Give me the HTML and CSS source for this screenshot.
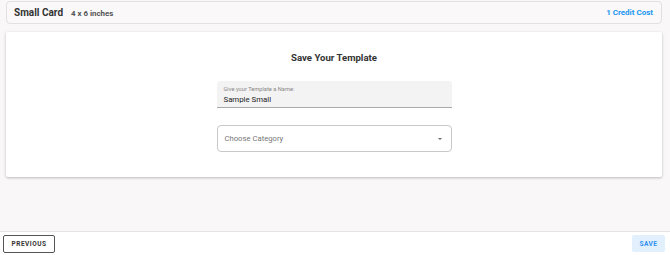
FILE: index.html
```html
<!DOCTYPE html>
<html lang="en">
<head>
  <meta charset="UTF-8" />
  <title>Save Template</title>
  <link rel="stylesheet" href="styles.css">
</head>
<body>

  <div class="page">
    <!-- CARD INFO -->
    <div class="info-bar">
      <div class="info-left">
        <span class="card-name">Small Card</span>
        <span class="card-size">4 x 6 inches</span>
      </div>
      <span class="credit">1 Credit Cost</span>
    </div>

    <!-- SAVE FORM -->
    <div class="panel">
      <h2 class="panel-title">Save Your Template</h2>
      <div class="field filled">
        <label>Give your Template a Name:</label>
        <div class="value">Sample Small</div>
      </div>
      <div class="field outlined">
        <span class="placeholder">Choose Category</span>
        <span class="caret"></span>
      </div>
    </div>
  </div>

  <!-- FOOTER -->
  <div class="footer">
    <button class="btn-prev">PREVIOUS</button>
    <button class="btn-save">SAVE</button>
  </div>

</body>
</html>
```

FILE: styles.css
```css
body {
  margin: 0;
  background: #f9f7f7;
  font-family: Roboto, "Liberation Sans", Arial, sans-serif;
  color: #333;
  height: 255px;
  display: flex;
  flex-direction: column;
}

.page {
  flex: 1;
  padding: 1px 8px 0 6px;
}

.info-bar {
  height: 21px;
  border: 1px solid #e2e0e0;
  border-radius: 4px;
  background: #faf8f8;
  display: flex;
  align-items: center;
  justify-content: space-between;
  padding: 0 8px 0 7px;
}

.info-left {
  display: flex;
  align-items: baseline;
  gap: 8px;
}

.card-name {
  font-size: 10px;
  font-weight: 700;
  color: #333;
}

.card-size {
  font-size: 7.9px;
  font-weight: 700;
  color: #555;
}

.credit {
  font-size: 8px;
  font-weight: 700;
  color: #2196f3;
}

.panel {
  margin-top: 8px;
  height: 145px;
  background: #fff;
  border-radius: 2px;
  box-shadow: 0 1px 3px rgba(0,0,0,0.25);
  display: flex;
  flex-direction: column;
  align-items: center;
  box-sizing: border-box;
  padding-top: 20px;
}

.panel-title {
  margin: 0 0 17px;
  font-size: 9.6px;
  line-height: 12px;
  font-weight: 700;
  color: #333;
}

.field {
  width: 235px;
  box-sizing: border-box;
}

.field.filled {
  height: 27px;
  background: #f4f3f3;
  border-bottom: 1px solid #aaa;
  border-radius: 3px 3px 0 0;
  padding: 5px 7px 0;
}

.field.filled label {
  display: block;
  font-size: 5.7px;
  color: #888;
  line-height: 7px;
}

.field.filled .value {
  font-size: 7.8px;
  color: #222;
  line-height: 10px;
  margin-top: 2px;
}

.field.outlined {
  margin-top: 17px;
  height: 27px;
  border: 1px solid #c8c8c8;
  border-radius: 4px;
  display: flex;
  align-items: center;
  justify-content: space-between;
  padding: 0 9px 0 7px;
}

.placeholder {
  font-size: 7.7px;
  color: #777;
}

.caret {
  width: 0;
  height: 0;
  border-left: 2.5px solid transparent;
  border-right: 2.5px solid transparent;
  border-top: 2.5px solid #666;
}

.footer {
  height: 23px;
  background: #fff;
  border-top: 1px solid #e6e4e4;
  display: flex;
  align-items: center;
  justify-content: space-between;
  padding: 0 5px 0 3px;
}

button {
  font-family: Roboto, "Liberation Sans", Arial, sans-serif;
  font-size: 6.5px;
  font-weight: 700;
  letter-spacing: 0.5px;
  cursor: pointer;
}

.btn-prev {
  width: 52px;
  height: 18px;
  background: #fff;
  border: 1px solid #555;
  border-radius: 2px;
  color: #333;
  padding: 0;
}

.btn-save {
  width: 33px;
  height: 17px;
  background: #e2effd;
  border: none;
  border-radius: 2px;
  color: #2e8ff0;
  padding: 0;
}
```
